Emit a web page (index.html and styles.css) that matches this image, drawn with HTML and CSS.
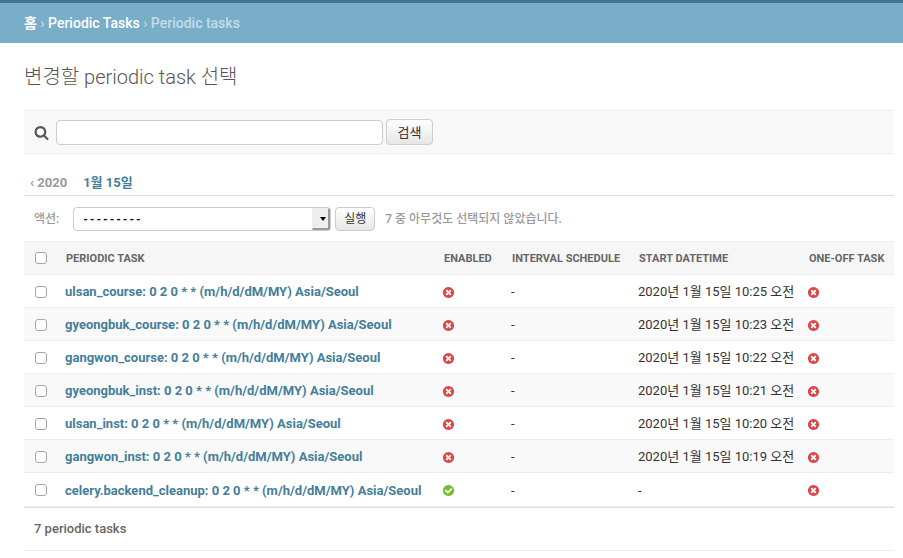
FILE: index.html
```html
<!DOCTYPE html>
<html lang="ko">
<head>
<meta charset="utf-8">
<meta name="viewport" content="width=device-width, initial-scale=1">
<title>변경할 periodic task 선택</title>
<link rel="stylesheet" href="styles.css">
</head>
<body>
<svg class="sprite" aria-hidden="true">
  <symbol id="icon-no" viewBox="0 0 1792 1792"><path d="M1277 1122q0-26-19-45l-181-181 181-181q19-19 19-45 0-27-19-46l-90-90q-19-19-46-19-26 0-45 19l-181 181-181-181q-19-19-45-19-27 0-46 19l-90 90q-19 19-19 46 0 26 19 45l181 181-181 181q-19 19-19 45 0 27 19 46l90 90q19 19 46 19 26 0 45-19l181-181 181 181q19 19 45 19 27 0 46-19l90-90q19-19 19-46zm387-226q0 209-103 385.5t-279.5 279.5-385.5 103-385.5-103-279.5-279.5-103-385.5 103-385.5 279.5-279.5 385.5-103 385.5 103 279.5 279.5 103 385.5z"/></symbol>
  <symbol id="icon-yes" viewBox="0 0 1792 1792"><path d="M1412 734q0-28-18-46l-91-90q-19-19-45-19t-45 19l-408 407-226-226q-19-19-45-19t-45 19l-91 90q-18 18-18 46 0 27 18 45l362 362q19 19 45 19 27 0 46-19l543-543q18-18 18-45zm252 162q0 209-103 385.5t-279.5 279.5-385.5 103-385.5-103-279.5-279.5-103-385.5 103-385.5 279.5-279.5 385.5-103 385.5 103 279.5 279.5 103 385.5z"/></symbol>
  <symbol id="icon-search" viewBox="0 0 1792 1792"><path d="M1216 832q0-185-131.5-316.5t-316.5-131.5-316.5 131.5-131.5 316.5 131.5 316.5 316.5 131.5 316.5-131.5 131.5-316.5zm512 832q0 52-38 90t-90 38q-54 0-90-38l-343-342q-179 124-399 124-143 0-273.5-55.5t-225-150-150-225-55.5-273.5 55.5-273.5 150-225 225-150 273.5-55.5 273.5 55.5 225 150 150 225 55.5 273.5q0 220-124 399l343 343q37 37 37 90z"/></symbol>
</svg>
<nav class="breadcrumbs"><a class="home" href="#">홈</a> › <a href="#">Periodic Tasks</a> › Periodic tasks</nav>
<main class="content">
  <h1>변경할 periodic task 선택</h1>
  <form class="toolbar">
    <label for="searchbar"><svg class="search-icon" role="img" aria-label="검색"><use href="#icon-search"/></svg></label>
    <input class="searchbar" type="text" id="searchbar">
    <button class="button button-search" type="submit">검색</button>
  </form>
  <nav class="dates"><a class="back" href="#">‹ 2020</a><a href="#">1월 15일</a></nav>
  <form>
    <div class="actions">
      <label for="action">액션:</label>
      <span class="select"><select id="action"><option>---------</option></select></span>
      <button class="button button-run" type="button">실행</button>
      <span class="counter">7 중 아무것도 선택되지 않았습니다.</span>
    </div>
    <table class="results">
      <colgroup><col class="col-check"><col><col class="col-enabled"><col class="col-interval"><col class="col-start"><col class="col-oneoff"></colgroup>
      <thead>
        <tr><th class="check"><input type="checkbox" aria-label="모두 선택"></th><th>Periodic task</th><th>Enabled</th><th>Interval schedule</th><th>Start datetime</th><th>One-off task</th></tr>
      </thead>
      <tbody>
        <tr><td class="check"><input type="checkbox" aria-label="ulsan_course"></td><th scope="row"><a href="#">ulsan_course: 0 2 0 * * (m/h/d/dM/MY) Asia/Seoul</a></th><td><svg class="icon no" role="img" aria-label="False"><use href="#icon-no"/></svg></td><td>-</td><td>2020년 1월 15일 10:25 오전</td><td><svg class="icon no" role="img" aria-label="False"><use href="#icon-no"/></svg></td></tr>
        <tr><td class="check"><input type="checkbox" aria-label="gyeongbuk_course"></td><th scope="row"><a href="#">gyeongbuk_course: 0 2 0 * * (m/h/d/dM/MY) Asia/Seoul</a></th><td><svg class="icon no" role="img" aria-label="False"><use href="#icon-no"/></svg></td><td>-</td><td>2020년 1월 15일 10:23 오전</td><td><svg class="icon no" role="img" aria-label="False"><use href="#icon-no"/></svg></td></tr>
        <tr><td class="check"><input type="checkbox" aria-label="gangwon_course"></td><th scope="row"><a href="#">gangwon_course: 0 2 0 * * (m/h/d/dM/MY) Asia/Seoul</a></th><td><svg class="icon no" role="img" aria-label="False"><use href="#icon-no"/></svg></td><td>-</td><td>2020년 1월 15일 10:22 오전</td><td><svg class="icon no" role="img" aria-label="False"><use href="#icon-no"/></svg></td></tr>
        <tr><td class="check"><input type="checkbox" aria-label="gyeongbuk_inst"></td><th scope="row"><a href="#">gyeongbuk_inst: 0 2 0 * * (m/h/d/dM/MY) Asia/Seoul</a></th><td><svg class="icon no" role="img" aria-label="False"><use href="#icon-no"/></svg></td><td>-</td><td>2020년 1월 15일 10:21 오전</td><td><svg class="icon no" role="img" aria-label="False"><use href="#icon-no"/></svg></td></tr>
        <tr><td class="check"><input type="checkbox" aria-label="ulsan_inst"></td><th scope="row"><a href="#">ulsan_inst: 0 2 0 * * (m/h/d/dM/MY) Asia/Seoul</a></th><td><svg class="icon no" role="img" aria-label="False"><use href="#icon-no"/></svg></td><td>-</td><td>2020년 1월 15일 10:20 오전</td><td><svg class="icon no" role="img" aria-label="False"><use href="#icon-no"/></svg></td></tr>
        <tr><td class="check"><input type="checkbox" aria-label="gangwon_inst"></td><th scope="row"><a href="#">gangwon_inst: 0 2 0 * * (m/h/d/dM/MY) Asia/Seoul</a></th><td><svg class="icon no" role="img" aria-label="False"><use href="#icon-no"/></svg></td><td>-</td><td>2020년 1월 15일 10:19 오전</td><td><svg class="icon no" role="img" aria-label="False"><use href="#icon-no"/></svg></td></tr>
        <tr><td class="check"><input type="checkbox" aria-label="celery.backend_cleanup"></td><th scope="row"><a href="#">celery.backend_cleanup: 0 2 0 * * (m/h/d/dM/MY) Asia/Seoul</a></th><td><svg class="icon yes" role="img" aria-label="True"><use href="#icon-yes"/></svg></td><td>-</td><td>-</td><td><svg class="icon no" role="img" aria-label="False"><use href="#icon-no"/></svg></td></tr>
      </tbody>
    </table>
    <p class="paginator">7 periodic tasks</p>
  </form>
</main>
</body>
</html>
```
FILE: styles.css
```css
* {
  box-sizing: border-box;
}

body {
  margin: 0;
  background: #fff;
  color: #333;
  font: 13px/16px Roboto, "Noto Sans CJK KR", sans-serif;
}

a {
  color: #447e9b;
  text-decoration: none;
}

input,
select,
button {
  font-family: inherit;
}

.sprite {
  display: none;
}

.breadcrumbs {
  padding: 10px 24px;
  border-top: 3px solid #417690;
  background: #79aec8;
  color: #c4dce8;
  font-size: 14px;
  line-height: 20px;
  font-weight: 500;
}

.breadcrumbs a {
  color: #fff;
}

.breadcrumbs .home {
  font-weight: 700;
}

.content {
  padding: 20px 9px 7px 24px;
}

h1 {
  margin: 0 0 19px;
  color: #555;
  font-size: 20px;
  line-height: 28px;
  font-weight: 300;
}

.toolbar {
  display: flex;
  align-items: center;
  height: 44px;
  margin-bottom: 16px;
  padding: 0 10px;
  border-top: 1px solid #eee;
  border-bottom: 1px solid #eee;
  background: #f8f8f8;
}

.search-icon {
  display: block;
  width: 15px;
  height: 15px;
  margin-right: 7px;
  fill: #555;
}

.searchbar {
  width: 327px;
  height: 25px;
  margin-right: 3px;
  padding: 2px 5px;
  border: 1px solid #ccc;
  border-radius: 4px;
  background: #fff;
  font-size: 14px;
}

.button {
  padding: 0 0 2px;
  border: 1px solid #ccc;
  border-radius: 4px;
  background: linear-gradient(#fff, #e6e6e6);
  color: #333;
}

.button-search {
  width: 47px;
  height: 26px;
  font-size: 13px;
}

.button-run {
  width: 40px;
  height: 24px;
  margin-right: 10px;
  font-size: 12px;
}

.dates {
  display: flex;
  gap: 16px;
  height: 26px;
  padding: 0 6px;
  border-bottom: 1px solid #ddd;
  font-size: 13px;
  line-height: 25px;
  font-weight: 700;
}

.dates .back {
  color: #999;
}

.actions {
  display: flex;
  align-items: center;
  height: 45px;
  padding: 0 10px;
  color: #999;
  font-size: 12px;
  font-weight: 500;
}

.actions label {
  margin-right: 14px;
}

.select {
  position: relative;
  width: 258px;
  height: 24px;
  margin-right: 4px;
}

.select select {
  appearance: none;
  display: block;
  width: 100%;
  height: 100%;
  padding: 0 20px 0 8px;
  border: 1px solid #ccc;
  border-radius: 4px;
  background: #fff;
  color: #000;
  font-family: "Liberation Mono", monospace;
  font-size: 11px;
  font-weight: 700;
}

.select::before {
  content: "";
  position: absolute;
  top: 1px;
  right: 1px;
  bottom: 1px;
  width: 15px;
  border: 1px solid #eee;
  border-right: 2px solid #999;
  border-bottom: 2px solid #999;
  background: #eee;
  pointer-events: none;
}

.select::after {
  content: "";
  position: absolute;
  top: 10px;
  right: 5px;
  border: 3px solid transparent;
  border-top: 4px solid #000;
  border-bottom: 0;
  pointer-events: none;
}

.results {
  width: 100%;
  border-collapse: separate;
  border-spacing: 0;
  table-layout: fixed;
  border-bottom: 1px solid #ddd;
}

.col-check {
  width: 33px;
}

.col-enabled {
  width: 68px;
}

.col-interval {
  width: 127px;
}

.col-start {
  width: 170px;
}

.col-oneoff {
  width: 94px;
}

.results th,
.results td {
  height: 33px;
  padding: 2px 8px 0;
  border-bottom: 1px solid #eee;
  text-align: left;
  white-space: nowrap;
}

.results thead th {
  height: 34px;
  padding: 1px 0 0 9px;
  border-top: 1px solid #eee;
  background: #f6f6f6;
  color: #666;
  font-size: 11px;
  font-weight: 700;
  text-transform: uppercase;
}

.results tbody th {
  font-weight: 700;
}

.results tbody tr:nth-child(even) {
  background: #f9f9f9;
}

.results tbody tr:last-child > * {
  height: 34px;
}

.results .check,
.results thead .check {
  padding: 0 0 0 11px;
}

.check input {
  appearance: none;
  display: block;
  width: 12px;
  height: 12px;
  margin: 0;
  border: 1px solid #a6a6a6;
  border-radius: 3px;
  background: #fff;
}

.results tbody .check {
  padding-top: 1px;
}

.icon {
  display: block;
  width: 13px;
  height: 13px;
  margin-left: -1px;
}

.no {
  fill: #dd4646;
}

.yes {
  fill: #70bf2b;
}

.paginator {
  margin: 0;
  padding: 0 10px;
  border-bottom: 1px solid #eee;
  color: #666;
  font-size: 13px;
  line-height: 42px;
  font-weight: 500;
}
```
